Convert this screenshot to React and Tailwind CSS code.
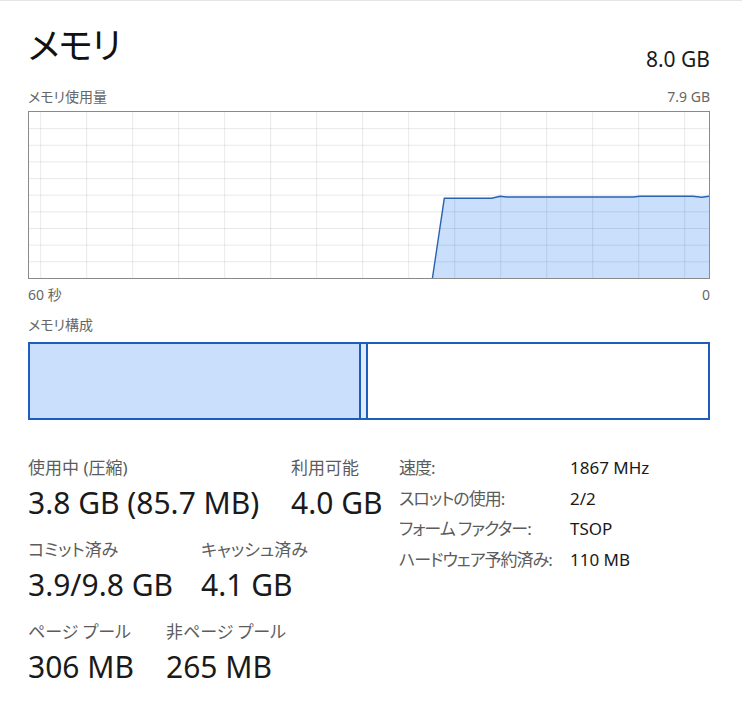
import React from 'react'

const font = { fontFamily: '"Noto Sans", "Noto Sans CJK JP", sans-serif' }

const usage = [
  [403.3, 167], [415.3, 86.3], [462.7, 86.3], [471, 84.3], [477.7, 85],
  [604, 85], [611, 84.3], [664, 84.3], [672.7, 85.3], [680, 84.3],
]

const UsageGraph = () => {
  const cols = Array.from({ length: 15 }, (_, i) => 11.7 + i * 46)
  const rows = Array.from({ length: 9 }, (_, i) => 16.6 + i * 16.65)
  const line = usage.map(([x, y]) => `${x},${y}`).join(' ')
  const area = `${line} 680,167 403.3,167`

  return (
    <div className="mt-[4px] h-[168px] border border-[#8a8a8a] bg-white">
      <svg width="680" height="166" viewBox="0 0 680 166" className="block">
        <polygon points={area} fill="#c9dffb" />
        {cols.map((x) => (
          <line key={`c${x}`} x1={x} y1="0" x2={x} y2="166" stroke="rgba(0,0,0,0.09)" strokeWidth="1" />
        ))}
        {rows.map((y) => (
          <line key={`r${y}`} x1="0" y1={y} x2="680" y2={y} stroke="rgba(0,0,0,0.09)" strokeWidth="1" />
        ))}
        <polyline points={line} fill="none" stroke="#2a62b2" strokeWidth="1.4" />
      </svg>
    </div>
  )
}

const Stat = ({ label, value, width }) => (
  <div className={width}>
    <p className="whitespace-nowrap text-[17px] leading-[24px] text-[#5c5c5c]">{label}</p>
    <p className="mt-[5px] whitespace-nowrap text-[30px] leading-[36px] text-[#1a1a1a]">{value}</p>
  </div>
)

const specs = [
  ['速度:', '1867 MHz'],
  ['スロットの使用:', '2/2'],
  ['フォーム ファクター:', 'TSOP'],
  ['ハードウェア予約済み:', '110 MB'],
]

export default function App() {
  return (
    <div style={font} className="h-[714px] w-[742px] overflow-hidden border-t border-[#e4e4e4] bg-white pl-[28px] pr-[32px] [font-feature-settings:'palt']">
      <div className="mt-[25px] flex h-[40px] items-start justify-between">
        <h1 className="text-[36px] leading-[40px] tracking-[-1px] text-[#111]">メモリ</h1>
        <span className="mt-[21px] text-[21px] leading-[24px] text-[#1a1a1a]">8.0 GB</span>
      </div>

      <div className="mt-[21px] flex justify-between text-[14px] leading-[20px] text-[#666]">
        <span>メモリ使用量</span>
        <span>7.9 GB</span>
      </div>

      <UsageGraph />

      <div className="mt-[6px] flex justify-between text-[14px] leading-[20px] text-[#666]">
        <span>60 秒</span>
        <span>0</span>
      </div>

      <p className="mt-[10px] text-[14px] leading-[20px] text-[#666]">メモリ構成</p>

      <div className="mt-[7px] flex h-[78px] border-2 border-[#1f5dbd]">
        <div className="w-[331px] border-r-2 border-[#1f5dbd] bg-[#c9dffb]" />
        <div className="w-[7px] border-r-2 border-[#1f5dbd] bg-[#dfeafb]" />
        <div className="flex-1 bg-white" />
      </div>

      <div className="flex">
        <div className="mt-[36px] flex w-[371px] flex-col gap-[17px]">
          <div className="flex">
            <Stat label="使用中 (圧縮)" value="3.8 GB (85.7 MB)" width="w-[263px]" />
            <Stat label="利用可能" value="4.0 GB" />
          </div>
          <div className="flex">
            <Stat label="コミット済み" value="3.9/9.8 GB" width="w-[173px]" />
            <Stat label="キャッシュ済み" value="4.1 GB" />
          </div>
          <div className="flex">
            <Stat label="ページ プール" value="306 MB" width="w-[138px]" />
            <Stat label="非ページ プール" value="265 MB" />
          </div>
        </div>

        <div className="mt-[33px] grid h-fit grid-cols-[171px_auto] text-[17px] leading-[30.5px]">
          {specs.map(([k, v]) => (
            <React.Fragment key={k}>
              <span className="whitespace-nowrap tracking-[-1px] text-[#5c5c5c]">{k}</span>
              <span className="whitespace-nowrap text-[#1a1a1a]">{v}</span>
            </React.Fragment>
          ))}
        </div>
      </div>
    </div>
  )
}
